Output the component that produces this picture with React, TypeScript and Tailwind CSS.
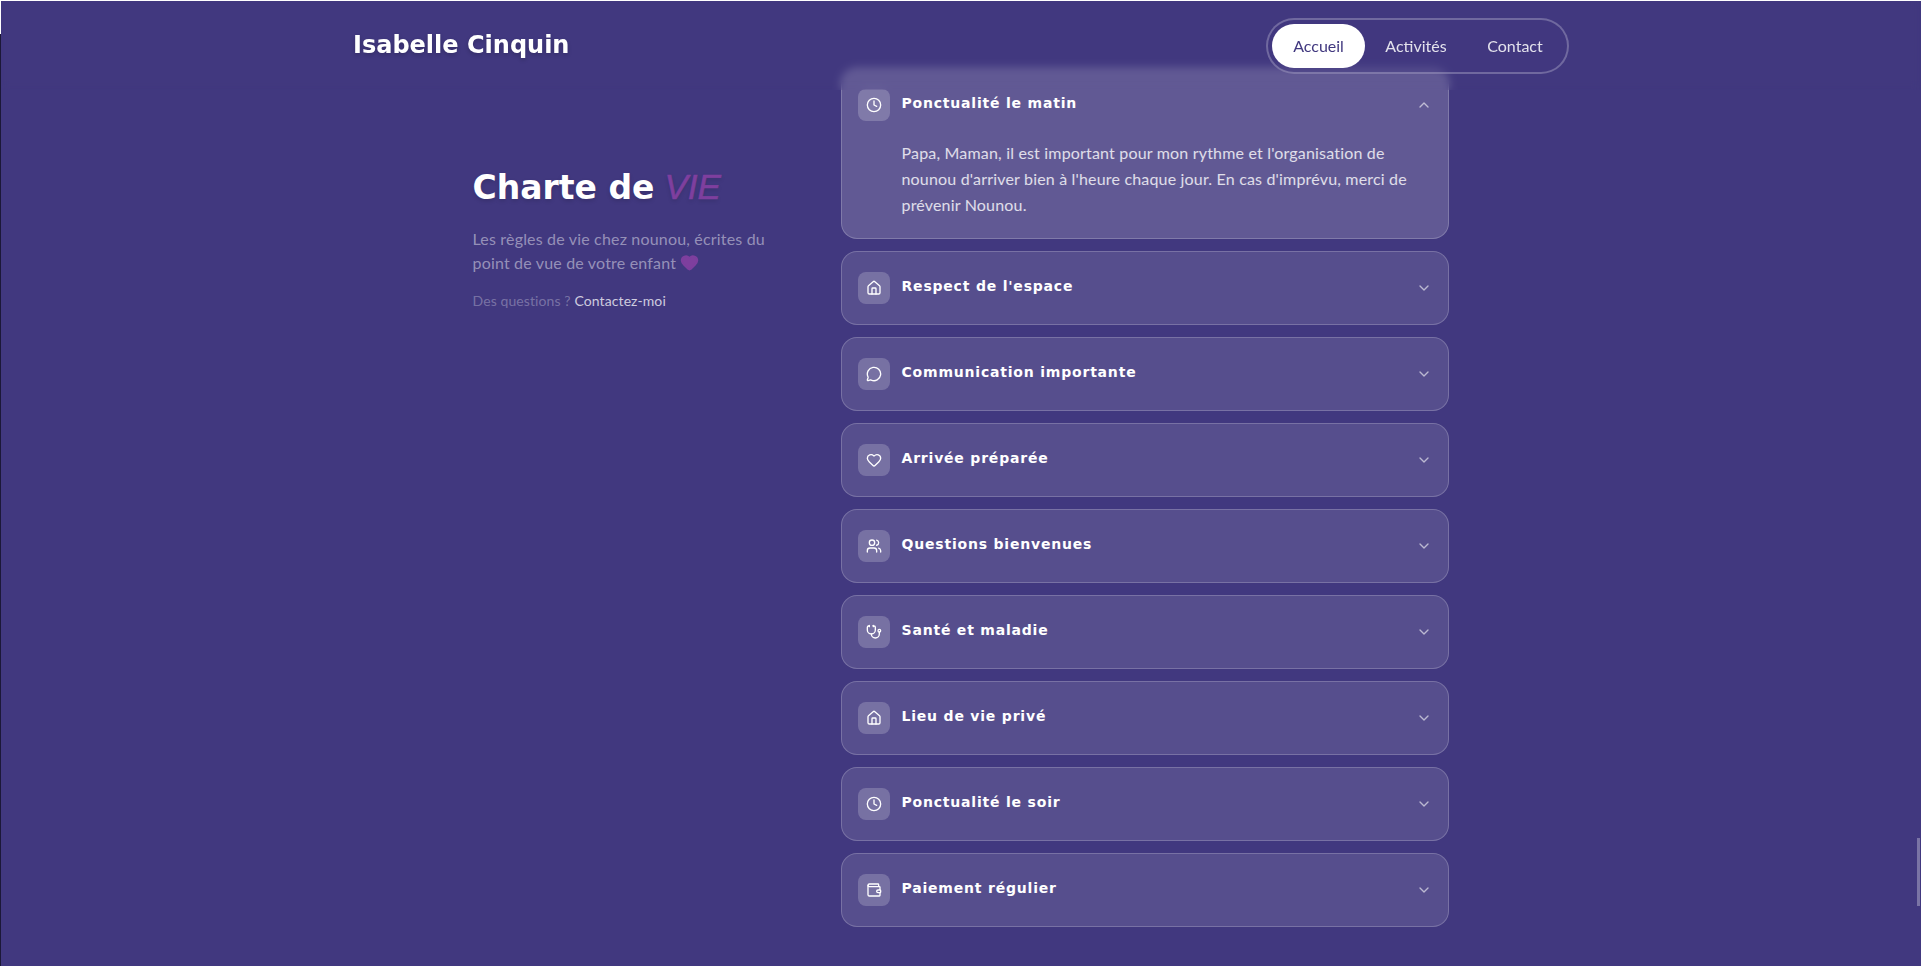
import { ChevronDown, ChevronUp, Clock, Heart, House, MessageCircle, Stethoscope, Users, Wallet } from 'lucide-react';
import type { LucideIcon } from 'lucide-react';

interface Rule {
  title: string;
  icon: LucideIcon;
  text?: string;
}

const rules: Rule[] = [
  {
    title: 'Ponctualité le matin',
    icon: Clock,
    text: "Papa, Maman, il est important pour mon rythme et l'organisation de nounou d'arriver bien à l'heure chaque jour. En cas d'imprévu, merci de prévenir Nounou.",
  },
  { title: "Respect de l'espace", icon: House },
  { title: 'Communication importante', icon: MessageCircle },
  { title: 'Arrivée préparée', icon: Heart },
  { title: 'Questions bienvenues', icon: Users },
  { title: 'Santé et maladie', icon: Stethoscope },
  { title: 'Lieu de vie privé', icon: House },
  { title: 'Ponctualité le soir', icon: Clock },
  { title: 'Paiement régulier', icon: Wallet },
];

function RuleCard({ rule }: { rule: Rule }) {
  const Icon = rule.icon;
  const open = Boolean(rule.text);
  return (
    <div className={`rounded-2xl border border-white/20 ${open ? 'bg-white/[0.17]' : 'bg-white/[0.115]'}`}>
      <div className="flex h-[72px] items-center gap-3 pl-4 pr-4">
        <div className="flex h-8 w-8 shrink-0 items-center justify-center rounded-lg bg-white/20">
          <Icon size={16} className="text-white" />
        </div>
        <h3 className="mb-1 flex-1 font-['DejaVu_Sans'] text-[14px] font-bold tracking-[0.8px] text-white">{rule.title}</h3>
        {open ? <ChevronUp size={16} className="text-white/60" /> : <ChevronDown size={16} className="text-white/60" />}
      </div>
      <Answer text={rule.text} />
    </div>
  );
}

function Answer({ text }: { text?: string }) {
  if (!text) return null;
  return <p className="-mt-px pb-5 pl-[60px] pr-6 text-base leading-[26px] tracking-[0.18px] text-white/80">{text}</p>;
}

export default function App() {
  return (
    <div className="relative h-[966px] overflow-hidden bg-[#41387f] font-['Lato',sans-serif]">
      <div className="absolute inset-x-0 top-0 z-30 h-[1px] bg-white" />
      <div className="absolute left-0 top-0 z-30 h-[34px] w-[1px] bg-white" />
      <div className="absolute bottom-0 left-0 top-[34px] z-30 w-[1px] bg-[#1c1838]" />

      <header className="absolute inset-x-0 top-0 z-20">
        <div className="absolute inset-x-0 top-0 h-[90px] backdrop-blur-[4px]" />
        <div className="relative mx-auto flex max-w-[1217px] items-center justify-between pl-px pt-[18px]">
          <span className="mb-[2px] font-['DejaVu_Sans'] text-[24px] font-bold text-white [text-shadow:0_2px_4px_rgba(0,0,0,0.2)]">
            Isabelle Cinquin
          </span>
          <nav className="flex h-14 items-center rounded-full border-2 border-white/25 bg-[#41387f]/40 p-1 text-base text-white/85">
            <a className="flex h-11 w-[93px] items-center justify-center rounded-full bg-white text-[#41387f]">Accueil</a>
            <a className="flex h-11 w-[102px] items-center justify-center">Activités</a>
            <a className="flex h-11 w-[96px] items-center justify-center">Contact</a>
          </nav>
        </div>
      </header>

      <main className="mx-auto grid max-w-[976px] grid-cols-[320px_1fr] gap-12 pt-[68px]">
        <aside className="pt-[95px]">
          <h1 className="flex items-baseline gap-[10px] font-['DejaVu_Sans'] text-[33px] font-bold leading-[48px] text-white [text-shadow:0_2px_4px_rgba(0,0,0,0.15)]">
            Charte de
            <span className="font-['Liberation_Sans'] text-[35px] font-normal italic text-[#7e3f9e] [-webkit-text-stroke:0.6px_#7e3f9e]">VIE</span>
          </h1>
          <p className="mt-[15px] w-[300px] text-base leading-6 tracking-[0.18px] text-white/45">
            Les règles de vie chez nounou, écrites du point de vue de votre enfant{' '}
            <Heart size={19} className="inline-block align-[-3px] text-[#7e3f9e]" fill="#7e3f9e" />
          </p>
          <p className="mt-[16px] text-sm tracking-[0.1px] text-white/30">
            Des questions ? <a className="text-white/75">Contactez-moi</a>
          </p>
        </aside>
        <section className="flex flex-col gap-3">
          {rules.map((rule) => (
            <RuleCard key={rule.title} rule={rule} />
          ))}
        </section>
      </main>

      <div className="absolute right-[1px] top-[838px] h-[68px] w-[3px] bg-white/30" />
    </div>
  );
}
